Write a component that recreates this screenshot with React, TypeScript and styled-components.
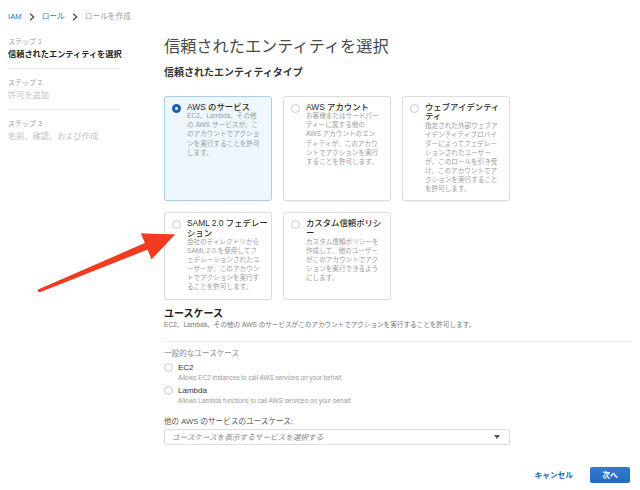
import React from 'react';
import styled, { createGlobalStyle } from 'styled-components';

const GlobalStyle = createGlobalStyle`
  html, body {
    margin: 0;
    padding: 0;
    background: #ffffff;
  }
  body {
    font-family: "Liberation Sans", "Noto Sans CJK JP", sans-serif;
    color: #333;
    -webkit-font-smoothing: antialiased;
  }
`;

interface EntityType {
  title: string[];
  lines: string[];
  selected?: boolean;
}

const entityTypes: EntityType[] = [
  {
    title: ['AWS のサービス'],
    lines: ['EC2、Lambda、その他', 'の AWS サービスが、こ', 'のアカウントでアクショ', 'ンを実行することを許可', 'します。'],
    selected: true,
  },
  {
    title: ['AWS アカウント'],
    lines: ['お客様またはサードパー', 'ティーに属する他の', 'AWS アカウントのエン', 'ティティが、このアカウ', 'ントでアクションを実行', 'することを許可します。'],
  },
  {
    title: ['ウェブアイデンティ', 'ティ'],
    lines: ['指定された外部ウェブア', 'イデンティティプロバイ', 'ダーによってフェデレー', 'ションされたユーザー', 'が、このロールを引き受', 'け、このアカウントでア', 'クションを実行すること', 'を許可します。'],
  },
  {
    title: ['SAML 2.0 フェデレー', 'ション'],
    lines: ['会社のディレクトリから', 'SAML 2.0 を使用してフ', 'ェデレーションされたユ', 'ーザーが、このアカウン', 'トでアクションを実行す', 'ることを許可します。'],
  },
  {
    title: ['カスタム信頼ポリシ', 'ー'],
    lines: ['カスタム信頼ポリシーを', '作成して、他のユーザー', 'がこのアカウントでアク', 'ションを実行できるよう', 'にします。'],
  },
];

const steps = [
  { label: 'ステップ 1', title: '信頼されたエンティティを選択', active: true },
  { label: 'ステップ 2', title: '許可を追加', active: false },
  { label: 'ステップ 3', title: '名前、確認、および作成', active: false },
];

const useCases = [
  { name: 'EC2', desc: 'Allows EC2 instances to call AWS services on your behalf.' },
  { name: 'Lambda', desc: 'Allows Lambda functions to call AWS services on your behalf.' },
];

const Chevron = () => (
  <svg width="6" height="8" viewBox="0 0 6 8">
    <path d="M1.2 0.8 L4.6 4 L1.2 7.2" fill="none" stroke="#555" strokeWidth="1.5" />
  </svg>
);

const Arrow = () => (
  <ArrowLayer width="640" height="490" viewBox="0 0 640 490">
    <path
      d="M38.4 289.4 L145 243.1 L141 233.4 L175 234.5 L151.6 259.2 L147.6 249.5 L39.6 292.2 Q36.5 291.6 38.4 289.4 Z"
      fill="#f33b1f"
    />
  </ArrowLayer>
);

const withBreaks = (lines: string[]) =>
  lines.map((l, i) => (
    <React.Fragment key={i}>
      {l}
      {i < lines.length - 1 && <br />}
    </React.Fragment>
  ));

export default function App() {
  return (
    <Page>
      <GlobalStyle />
      <Breadcrumb>
        <CrumbLink>IAM</CrumbLink>
        <Chevron />
        <CrumbLink>ロール</CrumbLink>
        <Chevron />
        <CrumbCurrent>ロールを作成</CrumbCurrent>
      </Breadcrumb>

      <Layout>
        <Sidebar>
          {steps.map((s, i) => (
            <Step key={s.label} $first={i === 0}>
              <StepLabel>{s.label}</StepLabel>
              <StepTitle $active={s.active}>{s.title}</StepTitle>
            </Step>
          ))}
        </Sidebar>

        <Main>
          <PageTitle>信頼されたエンティティを選択</PageTitle>
          <SectionTitle>信頼されたエンティティタイプ</SectionTitle>

          <CardGrid>
            {entityTypes.map((e) => (
              <Card key={e.title.join('')} $selected={!!e.selected}>
                <Radio $checked={!!e.selected} />
                <CardBody>
                  <CardTitle>{withBreaks(e.title)}</CardTitle>
                  <CardDesc>{withBreaks(e.lines)}</CardDesc>
                </CardBody>
              </Card>
            ))}
          </CardGrid>

          <UseCaseTitle>ユースケース</UseCaseTitle>
          <UseCaseDesc>EC2、Lambda、その他の AWS のサービスがこのアカウントでアクションを実行することを許可します。</UseCaseDesc>
          <Divider />
          <GroupLabel>一般的なユースケース</GroupLabel>

          {useCases.map((u) => (
            <UseCaseRow key={u.name}>
              <Radio $checked={false} />
              <div>
                <UseCaseName>{u.name}</UseCaseName>
                <UseCaseText>{u.desc}</UseCaseText>
              </div>
            </UseCaseRow>
          ))}

          <SelectLabel>他の AWS のサービスのユースケース:</SelectLabel>
          <SelectBox>
            <Placeholder>ユースケースを表示するサービスを選択する</Placeholder>
            <Caret />
          </SelectBox>

          <Footer>
            <CancelButton>キャンセル</CancelButton>
            <NextButton>次へ</NextButton>
          </Footer>
        </Main>
      </Layout>
      <Arrow />
    </Page>
  );
}

const Page = styled.div`
  position: relative;
  width: 640px;
  height: 490px;
  box-sizing: border-box;
  padding: 10px 10px 0 8px;
  overflow: hidden;
  font-family: "Liberation Sans", "Noto Sans CJK JP", sans-serif;
`;

const ArrowLayer = styled.svg`
  position: absolute;
  left: 0;
  top: 0;
  pointer-events: none;
  filter: drop-shadow(0 0 0.6px rgba(180, 30, 10, 0.5));
`;

const Breadcrumb = styled.nav`
  display: flex;
  align-items: center;
  gap: 7px;
  height: 13px;
  font-size: 7.7px;
  line-height: 13px;
`;

const CrumbLink = styled.span`
  color: #2f74bd;
`;

const CrumbCurrent = styled.span`
  color: #999;
`;

const Layout = styled.div`
  display: grid;
  grid-template-columns: 112px 1fr;
  column-gap: 44px;
  margin-top: 13px;
`;

const Sidebar = styled.aside`
  display: flex;
  flex-direction: column;
  padding-top: 1px;
`;

const Step = styled.div<{ $first: boolean }>`
  padding: ${({ $first }) => ($first ? '0' : '9px')} 0 7px;
  border-bottom: 1px solid #eaeaea;

  &:last-child {
    border-bottom: none;
  }
`;

const StepLabel = styled.div`
  font-size: 7px;
  line-height: 10px;
  color: #9a9a9a;
`;

const StepTitle = styled.div<{ $active: boolean }>`
  margin-top: 2px;
  font-size: 8.2px;
  line-height: 12px;
  white-space: nowrap;
  font-weight: ${({ $active }) => ($active ? 700 : 400)};
  color: ${({ $active }) => ($active ? '#222' : '#c2c2c2')};
`;

const Main = styled.main`
  display: flex;
  flex-direction: column;
  min-width: 0;
`;

const PageTitle = styled.h1`
  margin: 0;
  font-size: 16.2px;
  line-height: 20px;
  font-weight: 400;
  color: #4a4a4a;
`;

const SectionTitle = styled.h2`
  margin: 10px 0 0;
  font-size: 10px;
  line-height: 14px;
  font-weight: 700;
  color: #333;
`;

const CardGrid = styled.div`
  display: grid;
  grid-template-columns: repeat(3, 108px);
  column-gap: 11px;
  row-gap: 11px;
  margin-top: 16px;
`;

const Card = styled.div<{ $selected: boolean }>`
  display: flex;
  align-items: flex-start;
  gap: 6px;
  padding: 6px 4px 7px 7px;
  border-radius: 3px;
  border: 1px solid ${({ $selected }) => ($selected ? '#a9cfec' : '#dcdcdc')};
  background: ${({ $selected }) => ($selected ? '#eef7fe' : '#ffffff')};
  box-shadow: 0 1px 1px rgba(0, 0, 0, 0.04);
`;

const Radio = styled.span<{ $checked: boolean }>`
  flex: none;
  box-sizing: border-box;
  width: 9px;
  height: 9px;
  margin-top: 1px;
  border-radius: 50%;
  background: #fff;
  border: ${({ $checked }) => ($checked ? '3px solid #1a61b5' : '1px solid #c8c8c8')};
`;

const CardBody = styled.div`
  display: flex;
  flex-direction: column;
  min-width: 0;
`;

const CardTitle = styled.div`
  font-size: 8.4px;
  line-height: 9.3px;
  font-weight: 500;
  color: #2a2a2a;
  white-space: nowrap;
`;

const CardDesc = styled.div`
  margin-top: -1px;
  font-size: 6.6px;
  line-height: 9.1px;
  color: #9b9b9b;
  white-space: nowrap;
`;

const UseCaseTitle = styled.h2`
  margin: 7px 0 0;
  font-size: 10px;
  line-height: 13px;
  font-weight: 700;
  color: #222;
`;

const UseCaseDesc = styled.p`
  margin: 0;
  font-size: 6.6px;
  line-height: 9px;
  color: #777;
`;

const Divider = styled.hr`
  margin: 12px 0 0;
  border: none;
  border-top: 1px solid #eaeaea;
`;

const GroupLabel = styled.div`
  margin-top: 6px;
  font-size: 7.6px;
  line-height: 11px;
  color: #8a8a8a;
`;

const UseCaseRow = styled.div`
  display: flex;
  align-items: flex-start;
  gap: 5px;
  margin-top: 3px;
`;

const UseCaseName = styled.div`
  font-size: 8px;
  line-height: 11px;
  color: #333;
`;

const UseCaseText = styled.div`
  font-size: 6.4px;
  line-height: 9px;
  color: #9b9b9b;
`;

const SelectLabel = styled.div`
  margin-top: 11px;
  font-size: 7.6px;
  line-height: 11px;
  color: #555;
`;

const SelectBox = styled.div`
  display: flex;
  align-items: center;
  justify-content: space-between;
  box-sizing: border-box;
  width: 346px;
  height: 16px;
  margin-top: 2px;
  padding: 0 9px 0 7px;
  border: 1px solid #dcdcdc;
  border-radius: 2px;
  background: #fff;
`;

const Placeholder = styled.span`
  font-size: 7.6px;
  font-style: italic;
  color: #888;
`;

const Caret = styled.span`
  width: 0;
  height: 0;
  border-left: 3.5px solid transparent;
  border-right: 3.5px solid transparent;
  border-top: 4px solid #555;
`;

const Footer = styled.div`
  display: flex;
  justify-content: flex-end;
  align-items: center;
  gap: 17px;
  margin-top: 22px;
`;

const CancelButton = styled.button`
  border: none;
  background: none;
  padding: 0;
  font-family: inherit;
  font-size: 7.7px;
  font-weight: 700;
  color: #2369b3;
  cursor: pointer;
`;

const NextButton = styled.button`
  width: 40px;
  height: 16px;
  border: none;
  border-radius: 2px;
  padding: 0;
  background: linear-gradient(#2f7ad0, #246cc0);
  color: #fff;
  font-family: inherit;
  font-size: 7.7px;
  font-weight: 700;
  cursor: pointer;
`;
